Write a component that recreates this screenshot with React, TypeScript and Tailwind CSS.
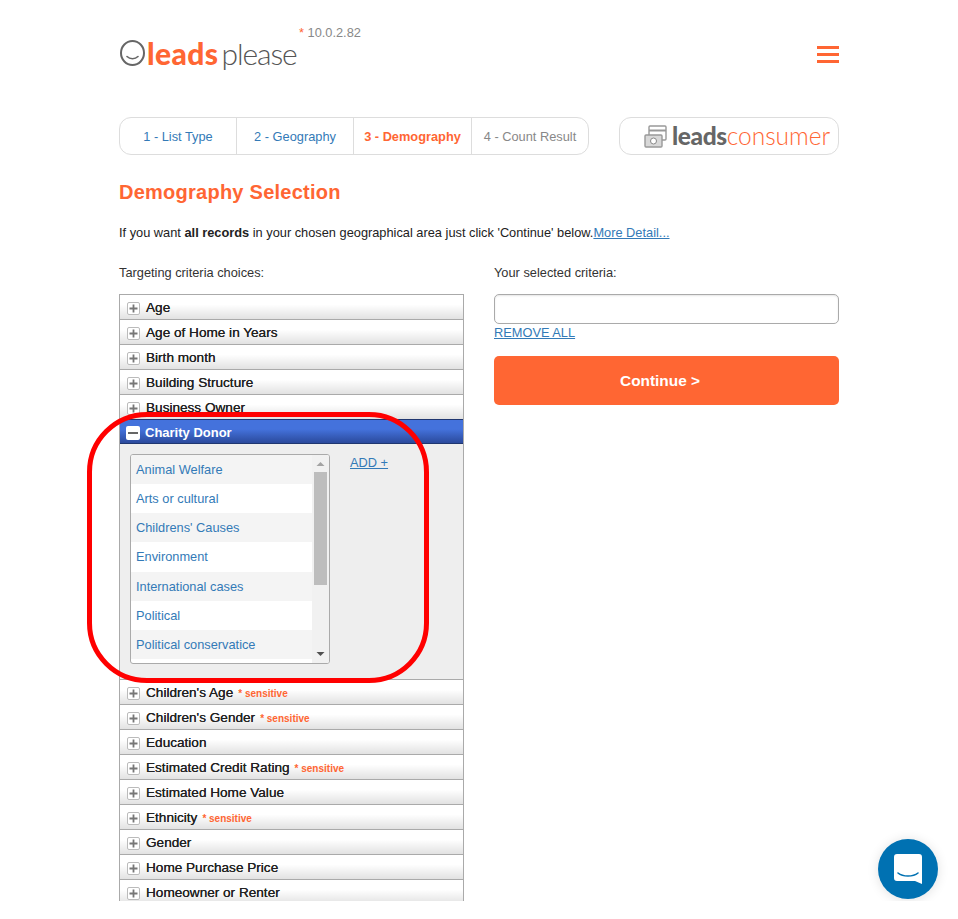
import React from "react";

const before = ["Age", "Age of Home in Years", "Birth month", "Building Structure", "Business Owner"];
const after: [string, boolean][] = [
  ["Children's Age", true],
  ["Children's Gender", true],
  ["Education", false],
  ["Estimated Credit Rating", true],
  ["Estimated Home Value", false],
  ["Ethnicity", true],
  ["Gender", false],
  ["Home Purchase Price", false],
  ["Homeowner or Renter", false],
];
const options = ["Animal Welfare", "Arts or cultural", "Childrens' Causes", "Environment", "International cases", "Political", "Political conservatice"];

function Plus() {
  return (
    <span className="flex h-[13px] w-[13px] shrink-0 items-center justify-center rounded-[2px] border border-[#bbb] bg-white">
      <svg width="9" height="9" viewBox="0 0 9 9">
        <path d="M4.5 0.5v8M0.5 4.5h8" stroke="#777" strokeWidth="1.8" />
      </svg>
    </span>
  );
}

function Row({ label, sensitive }: { label: string; sensitive?: boolean }) {
  return (
    <div className="flex h-[25px] items-center gap-[6px] border-t border-[#aaa] bg-gradient-to-b from-white from-40% to-[#e2e2e2] pl-[7px] pt-[2px] text-[13.6px] text-[#222] [text-shadow:0_0_0.3px_#222]">
      <Plus />
      <span>
        {label}
        {sensitive && <span className="ml-[5px] text-[10px] font-bold text-[#ff6633] [text-shadow:none]">* sensitive</span>}
      </span>
    </div>
  );
}

export default function App() {
  return (
    <div className="relative h-[901px] w-[958px] overflow-hidden bg-white font-['Liberation_Sans',Arial,sans-serif]">
      <div className="mx-auto w-[720px]">
        <header className="flex h-[117px] items-start justify-between">
          <div className="relative ml-[1px] mt-[38px] flex items-center">
            <svg width="25" height="26" viewBox="0 0 25 26">
              <ellipse cx="12.5" cy="13" rx="11.5" ry="12" fill="none" stroke="#666" strokeWidth="2" />
              <path d="M7 16.5c3 3 8 3 11 0" fill="none" stroke="#666" strokeWidth="1.6" strokeLinecap="round" />
            </svg>
            <span className="ml-[2px] font-['Lato',sans-serif] text-[30px] leading-[30px]">
              <span className="font-black tracking-[0.4px] text-[#ff6633]">leads</span>
              <span className="ml-[3px] font-light tracking-[-1.1px] text-[#555]">please</span>
            </span>
            <span className="absolute left-[179px] top-[-15px] whitespace-nowrap text-[12.8px] text-[#888]">
              <span className="text-[#ff6633]">*</span> 10.0.2.82
            </span>
          </div>
          <div className="mt-[46px] flex w-[22px] flex-col gap-[4px]">
            <span className="h-[3px] bg-[#ff6633]" />
            <span className="h-[3px] bg-[#ff6633]" />
            <span className="h-[3px] bg-[#ff6633]" />
          </div>
        </header>

        <div className="flex justify-between">
          <nav className="flex h-[38px] w-[470px] rounded-[12px] border border-[#ddd] text-[12.8px] leading-[37px]">
            <a className="w-[117px] border-r border-[#ddd] text-center text-[#337ab7]">1 - List Type</a>
            <a className="w-[117px] border-r border-[#ddd] text-center text-[#337ab7]">2 - Geography</a>
            <a className="w-[118px] border-r border-[#ddd] text-center font-bold text-[#ff6633]">3 - Demography</a>
            <span className="flex-1 text-center text-[#888]">4 - Count Result</span>
          </nav>
          <div className="flex h-[38px] w-[220px] items-center rounded-[12px] border border-[#ddd] pl-[24px]">
            <svg width="23" height="23" viewBox="0 0 23 23" className="shrink-0">
              <rect x="5" y="1" width="17" height="14" rx="1" fill="#fff" stroke="#999" strokeWidth="1.4" />
              <path d="M5 5.5h17" stroke="#999" strokeWidth="2" />
              <rect x="1" y="10" width="17" height="12" rx="1" fill="#d8d8d8" stroke="#999" strokeWidth="1.4" />
              <circle cx="9.5" cy="16" r="3" fill="#fff" stroke="#888" />
            </svg>
            <span className="ml-[5px] font-['Lato',sans-serif] text-[24.5px] leading-[36px]">
              <span className="font-black tracking-[-0.4px] text-[#666]">leads</span>
              <span className="font-light text-[#ff6633]">consumer</span>
            </span>
          </div>
        </div>

        <h1 className="mt-[25px] text-[20px] font-bold leading-[24px] tracking-[0.25px] text-[#ff6633]">Demography Selection</h1>
        <p className="mt-[21px] text-[12.8px] leading-[16px] text-[#222]">
          If you want <b>all records</b> in your chosen geographical area just click 'Continue' below.
          <a className="text-[#337ab7] underline">More Detail...</a>
        </p>

        <div className="mt-[24px] flex justify-between">
          <div className="w-[345px]">
            <p className="h-[29px] text-[12.8px] leading-[16px] text-[#333]">Targeting criteria choices:</p>
            <div className="border-x border-[#aaa]">
              {before.map((l) => <Row key={l} label={l} />)}
              <div className="flex h-[25px] items-center gap-[5px] border-y border-[#1f3670] bg-gradient-to-b from-[#4472dc] from-40% to-[#2b4a9c] pl-[6px] pt-[2px] text-[13px] font-bold text-white">
                <span className="flex h-[14px] w-[14px] items-center justify-center rounded-[2px] bg-white">
                  <span className="h-[2px] w-[10px] bg-[#666]" />
                </span>
                Charity Donor
              </div>
              <div className="flex h-[235px] items-start bg-[#eee] pl-[10px] pt-[10px]">
                <div className="relative flex h-[210px] w-[200px] overflow-hidden rounded-[3px] border border-[#aaa] bg-white">
                  <ul className="w-[181px] text-[12.8px] text-[#337ab7]">
                    {options.map((o, i) => (
                      <li key={o} className={`h-[29.17px] pl-[5px] leading-[29px] ${i % 2 === 0 ? "bg-[#f4f4f4]" : "bg-white"}`}>{o}</li>
                    ))}
                  </ul>
                  <div className="flex w-[17px] flex-col items-center bg-[#f1f1f1]">
                    <svg width="9" height="17" viewBox="0 0 9 17"><path d="M0.5 11h8L4.5 7z" fill="#a3a3a3" /></svg>
                    <div className="h-[113px] w-[13px] bg-[#bdbdbd]" />
                    <div className="flex-1" />
                    <svg width="9" height="17" viewBox="0 0 9 17"><path d="M0.5 6h8L4.5 10z" fill="#505050" /></svg>
                  </div>
                </div>
                <a className="ml-[20px] mt-[1px] text-[12.8px] leading-[16px] text-[#337ab7] underline">ADD +</a>
              </div>
              {after.map(([l, s]) => <Row key={l} label={l} sensitive={s} />)}
            </div>
          </div>

          <div className="w-[345px]">
            <p className="h-[29px] text-[12.8px] leading-[16px] text-[#333]">Your selected criteria:</p>
            <div className="h-[30px] rounded-[5px] border border-[#aaa] bg-white shadow-[inset_0_1px_2px_rgba(0,0,0,0.1)]" />
            <a className="block text-[12.8px] leading-[18px] text-[#337ab7] underline">REMOVE ALL</a>
            <button className="mt-[14px] h-[49px] w-full rounded-[5px] bg-[#ff6633] pr-[13px] text-[15.4px] font-bold text-white">Continue &gt;</button>
          </div>
        </div>
      </div>

      <div className="pointer-events-none absolute left-[87px] top-[412px] h-[271px] w-[342px] rounded-[60px] border-[5px] border-[#f00]" />

      <div className="absolute left-[878px] top-[839px] flex h-[60px] w-[60px] items-center justify-center rounded-full bg-[#0071b2] shadow-[0_1px_12px_rgba(0,0,0,0.12)]">
        <svg width="28" height="30" viewBox="0 0 28 30">
          <path d="M3 0h22a3 3 0 0 1 3 3v27l-7-3H3a3 3 0 0 1-3-3V3a3 3 0 0 1 3-3z" fill="#fff" />
          <path d="M4 19c5 4 15 4 20 0" fill="none" stroke="#0071b2" strokeWidth="1.6" strokeLinecap="round" />
        </svg>
      </div>
    </div>
  );
}
